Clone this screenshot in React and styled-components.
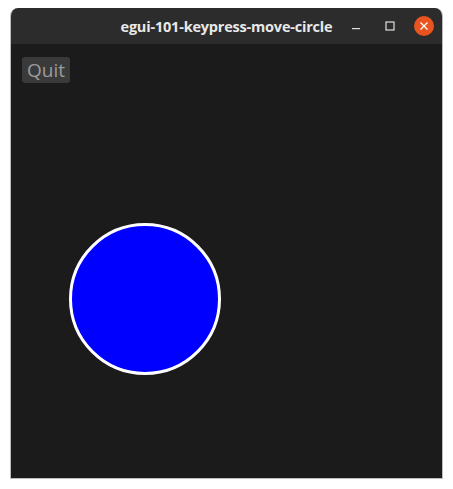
import React from "react";
import styled, { createGlobalStyle } from "styled-components";

const Global = createGlobalStyle`
  body {
    margin: 0;
    background: #ffffff;
  }
`;

// the whole window, title bar plus canvas
const Frame = styled.div`
  width: 433px;
  height: 471px;
  margin: 8px 0 0 10px;
  display: flex;
  flex-direction: column;
  border-radius: 8px 8px 0 0;
  overflow: hidden;
  box-sizing: border-box;
  border: 1px solid #bdbdbd;
  border-top: none;
`;

const TitleBar = styled.div`
  height: 36px;
  flex: none;
  display: grid;
  grid-template-columns: 1fr auto 1fr;
  align-items: center;
  background: #2c2c2c;
  margin: 0 -1px;
`;

const Title = styled.div`
  grid-column: 2;
  color: #e8e8e8;
  font-family: "Open Sans", "DejaVu Sans", sans-serif;
  font-weight: 700;
  font-size: 14.5px;
  letter-spacing: -0.2px;
`;

const Controls = styled.div`
  justify-self: end;
  display: flex;
  align-items: center;
  gap: 14px;
  padding-right: 9px;
`;

const CtrlButton = styled.div`
  width: 20px;
  height: 20px;
  display: flex;
  align-items: center;
  justify-content: center;
  border-radius: 50%;
  background: ${(p) => (p.close ? "#e95420" : "transparent")};
`;

const Canvas = styled.div`
  flex: 1;
  position: relative;
  background: #1b1b1b;
  padding: 13px 11px;
`;

const QuitButton = styled.button`
  display: block;
  height: 26px;
  padding: 0 5px;
  border: none;
  border-radius: 3px;
  background: #3a3a3a;
  color: #9c9c9c;
  font-family: "Open Sans", "DejaVu Sans", sans-serif;
  font-size: 19px;
  line-height: 26px;
`;

const Board = styled.svg`
  position: absolute;
  left: 0;
  top: 0;
`;

export default function App() {
  return (
    <>
      <Global />
      <Frame>
        <TitleBar>
          <Title>egui-101-keypress-move-circle</Title>
          <Controls>
            <CtrlButton>
              <svg width="10" height="10" viewBox="0 0 10 10">
                <rect x="1" y="7" width="8" height="1.2" fill="#e0e0e0" />
              </svg>
            </CtrlButton>
            <CtrlButton>
              <svg width="10" height="10" viewBox="0 0 10 10">
                <rect x="1" y="1" width="8" height="8" fill="none" stroke="#e0e0e0" strokeWidth="1.2" />
              </svg>
            </CtrlButton>
            <CtrlButton close>
              <svg width="10" height="10" viewBox="0 0 10 10">
                <path d="M1.5 1.5 L8.5 8.5 M8.5 1.5 L1.5 8.5" stroke="#fff" strokeWidth="1.3" />
              </svg>
            </CtrlButton>
          </Controls>
        </TitleBar>
        <Canvas>
          <Board width="431" height="435">
            <circle cx="134" cy="255" r="74.5" fill="#0000ff" stroke="#ffffff" strokeWidth="3" />
          </Board>
          <QuitButton>Quit</QuitButton>
        </Canvas>
      </Frame>
    </>
  );
}
